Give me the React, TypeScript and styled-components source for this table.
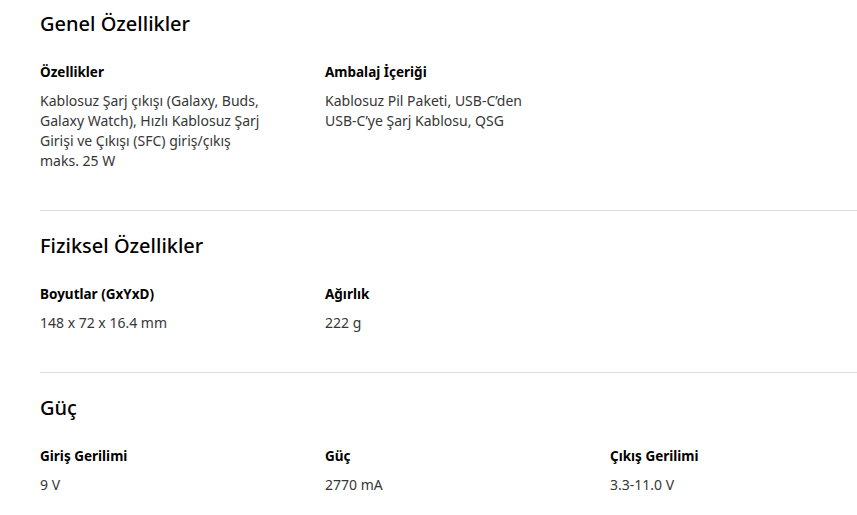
import styled, { createGlobalStyle } from 'styled-components'

const GlobalStyle = createGlobalStyle`
  body {
    margin: 0;
    background: #ffffff;
    font-family: "Noto Sans", "Open Sans", sans-serif;
    color: #000000;
  }
`

const Page = styled.div`
  padding-left: 40px;
`

const Section = styled.section<{ first?: boolean }>`
  padding-top: ${({ first }) => (first ? '10px' : '21px')};
  padding-bottom: 39px;
  border-bottom: 1px solid #dddddd;
`

const SectionTitle = styled.h2`
  margin: 0;
  font-size: 20px;
  line-height: 28px;
  font-weight: 500;
  color: #000000;
`

const SpecGrid = styled.div`
  display: grid;
  grid-template-columns: repeat(3, 285px);
  margin-top: 24px;
`

const SpecItem = styled.div`
  padding-right: 57px;
`

const SpecLabel = styled.div`
  font-size: 13.5px;
  line-height: 20px;
  font-weight: 700;
  color: #000000;
`

const SpecValue = styled.div`
  margin-top: 9px;
  font-size: 14px;
  line-height: 20px;
  color: #363636;
`

interface Spec {
  label: string
  value: string
}

const sections: { title: string; specs: Spec[] }[] = [
  {
    title: 'Genel Özellikler',
    specs: [
      {
        label: 'Özellikler',
        value:
          'Kablosuz Şarj çıkışı (Galaxy, Buds, Galaxy Watch), Hızlı Kablosuz Şarj Girişi ve Çıkışı (SFC) giriş/çıkış maks. 25 W',
      },
      { label: 'Ambalaj İçeriği', value: 'Kablosuz Pil Paketi, USB-C’den USB-C’ye Şarj Kablosu, QSG' },
    ],
  },
  {
    title: 'Fiziksel Özellikler',
    specs: [
      { label: 'Boyutlar (GxYxD)', value: '148 x 72 x 16.4 mm' },
      { label: 'Ağırlık', value: '222 g' },
    ],
  },
  {
    title: 'Güç',
    specs: [
      { label: 'Giriş Gerilimi', value: '9 V' },
      { label: 'Güç', value: '2770 mA' },
      { label: 'Çıkış Gerilimi', value: '3.3-11.0 V' },
    ],
  },
]

export default function App() {
  return (
    <>
      <GlobalStyle />
      <Page>
        {sections.map((s, i) => (
          <Section key={s.title} first={i === 0}>
            <SectionTitle>{s.title}</SectionTitle>
            <SpecGrid>
              {s.specs.map(spec => (
                <SpecItem key={spec.label}>
                  <SpecLabel>{spec.label}</SpecLabel>
                  <SpecValue>{spec.value}</SpecValue>
                </SpecItem>
              ))}
            </SpecGrid>
          </Section>
        ))}
      </Page>
    </>
  )
}
